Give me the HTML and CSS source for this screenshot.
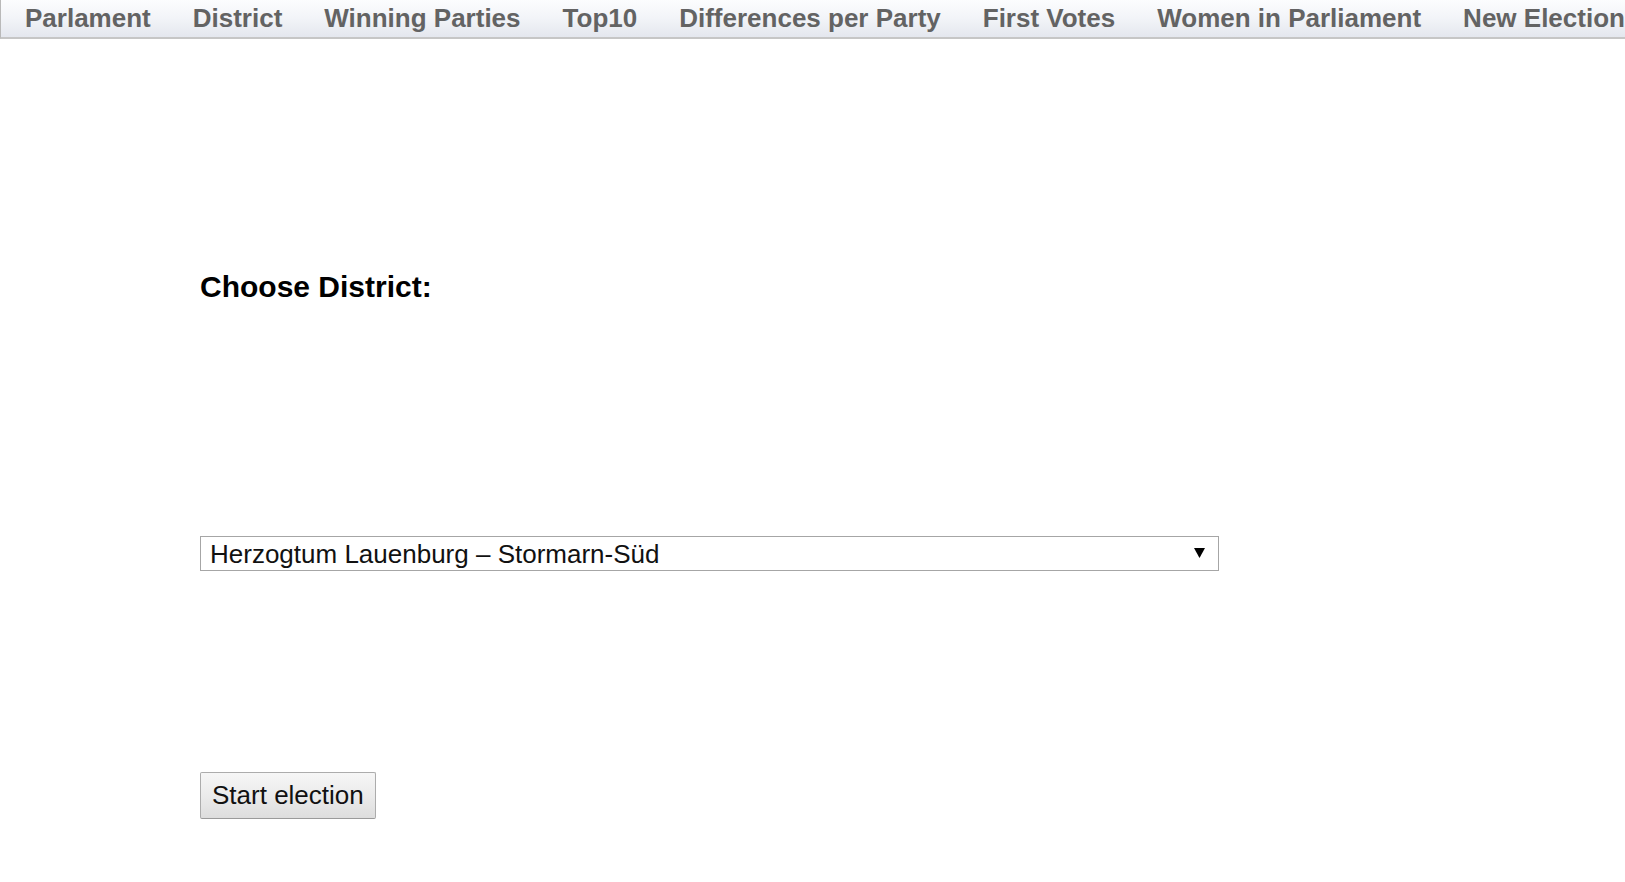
FILE: index.html
```html
<!DOCTYPE html>
<html lang="en">
<head>
<meta charset="utf-8">
<title>Choose District</title>
<link rel="stylesheet" href="styles.css">
</head>
<body>
<nav class="topnav">
  <a class="nav-item" href="#">Parlament</a>
  <a class="nav-item" href="#">District</a>
  <a class="nav-item" href="#">Winning Parties</a>
  <a class="nav-item" href="#">Top10</a>
  <a class="nav-item" href="#">Differences per Party</a>
  <a class="nav-item" href="#">First Votes</a>
  <a class="nav-item" href="#">Women in Parliament</a>
  <a class="nav-item" href="#">New Election</a>
</nav>
<main class="content">
  <h3 class="title">Choose District:</h3>
  <div class="select-wrap">
    <select class="district-select">
      <option>Herzogtum Lauenburg – Stormarn-Süd</option>
    </select>
    <svg class="select-arrow" width="11" height="10" viewBox="0 0 11 10" aria-hidden="true"><polygon points="0,0 11,0 5.5,10" fill="#000"/></svg>
  </div>
  <button class="start-btn" type="button">Start election</button>
</main>
</body>
</html>
```

FILE: styles.css
```css
html, body {
  margin: 0;
  padding: 0;
  background: #ffffff;
}

body {
  font-family: "Liberation Sans", Arial, sans-serif;
  color: #000;
  overflow: hidden;
}

.topnav {
  display: flex;
  flex-wrap: nowrap;
  gap: 42px;
  padding: 4px 0 4px 24px;
  height: 29px;
  background: linear-gradient(to bottom, #fcfdfe 0%, #f2f4f8 50%, #e4e7ee 100%);
  border-left: 1px solid #b9b9b9;
  border-bottom: 2px solid #c6c6c6;
  overflow: hidden;
  white-space: nowrap;
}

.nav-item {
  font-size: 26px;
  font-weight: bold;
  line-height: 29px;
  color: #636363;
  text-decoration: none;
  flex: none;
}

.content {
  padding-left: 200px;
}

.title {
  margin: 231px 0 0 0;
  font-size: 30px;
  font-weight: bold;
  line-height: 34px;
  color: #000;
}

.select-wrap {
  position: relative;
  width: 1019px;
  margin-top: 232px;
}

.district-select {
  display: block;
  width: 1019px;
  height: 35px;
  margin: 0;
  padding: 0 40px 0 9px;
  font-family: "Liberation Sans", Arial, sans-serif;
  font-size: 26px;
  color: #111;
  background: #fff;
  border: 1px solid #a6a6a6;
  border-radius: 0;
  appearance: none;
  -webkit-appearance: none;
  outline: none;
}

.select-arrow {
  position: absolute;
  right: 14px;
  top: 12px;
  pointer-events: none;
}

.start-btn {
  display: block;
  margin-top: 201px;
  height: 47px;
  padding: 0 11px;
  font-family: "Liberation Sans", Arial, sans-serif;
  font-size: 26px;
  color: #111;
  background: linear-gradient(to bottom, #f6f6f6 0%, #ebebeb 50%, #dddddd 100%);
  border: 1px solid #acacac;
  border-bottom-color: #9a9a9a;
  border-radius: 2px;
  cursor: pointer;
}
```
